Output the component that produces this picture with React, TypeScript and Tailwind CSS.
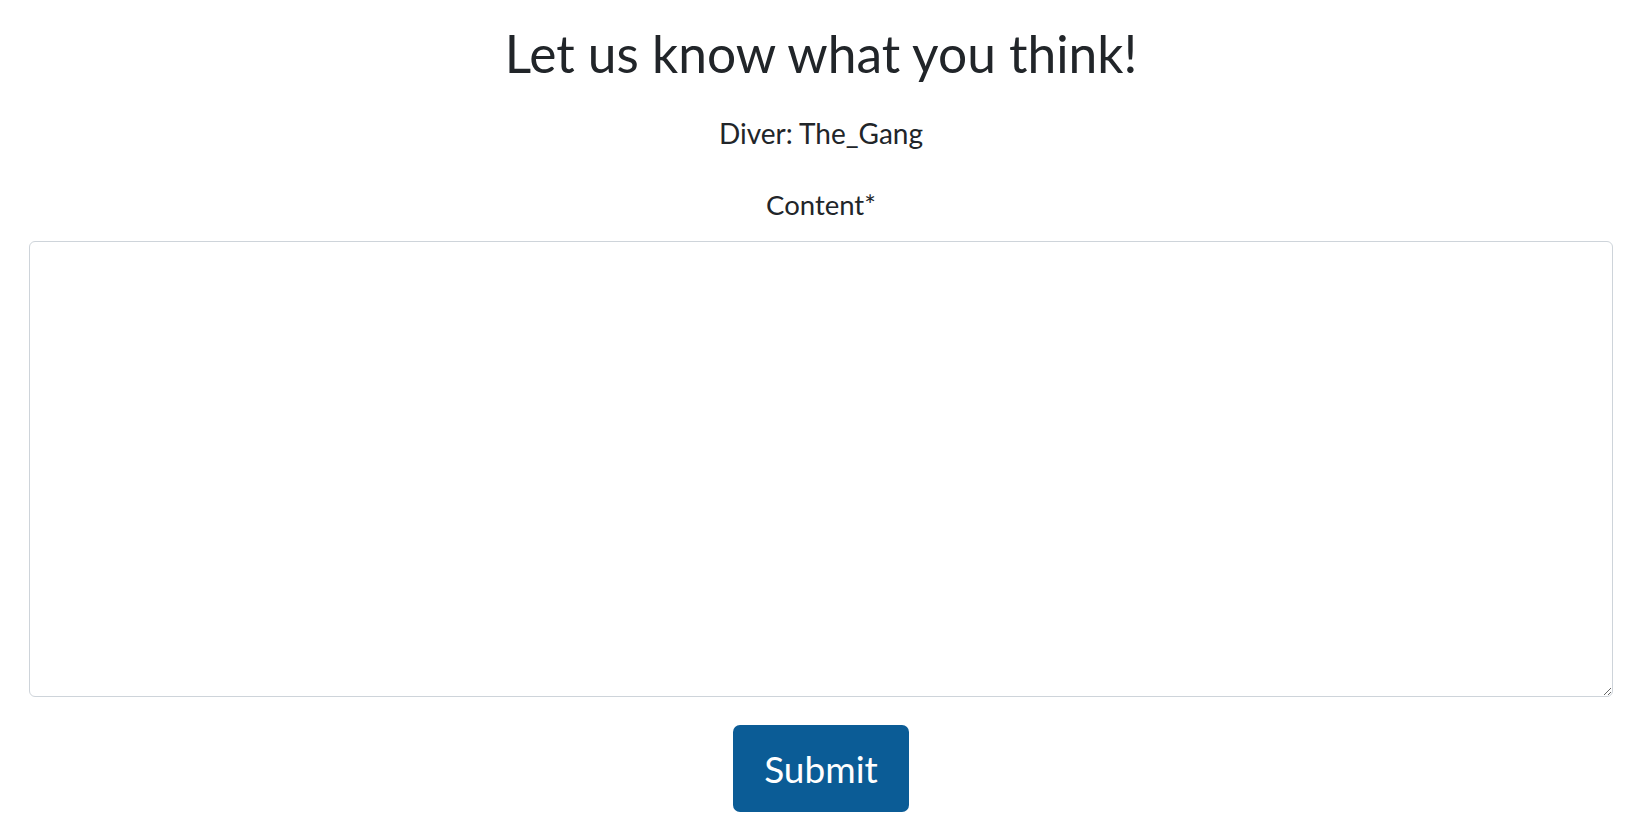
export default function App() {
  return (
    <div
      className="min-h-screen bg-white text-[#212529]"
      style={{ fontFamily: "Lato, 'Noto Sans', sans-serif" }}
    >
      <div className="flex flex-col items-center px-[29px] pt-[22px]">
        <h1 className="m-0 text-[51.5px] leading-[62px] font-normal">Let us know what you think!</h1>
        <p className="mt-[33px] text-[28px] leading-[32px]">Diver: The_Gang</p>
        <form className="mt-[40px] flex w-full flex-col items-center" onSubmit={(e) => e.preventDefault()}>
          <label htmlFor="content" className="text-[27.5px] leading-[32px]">
            Content*
          </label>
          <textarea
            id="content"
            className="mt-[20px] h-[456px] w-full rounded-[6px] border border-[#ced4da] bg-white px-3 py-2 text-base outline-none"
          />
          <button
            type="submit"
            className="mt-[28px] h-[87px] w-[176px] rounded-[7px] bg-[#0b5c96] text-[37px] leading-none text-white"
          >
            Submit
          </button>
        </form>
      </div>
    </div>
  );
}
